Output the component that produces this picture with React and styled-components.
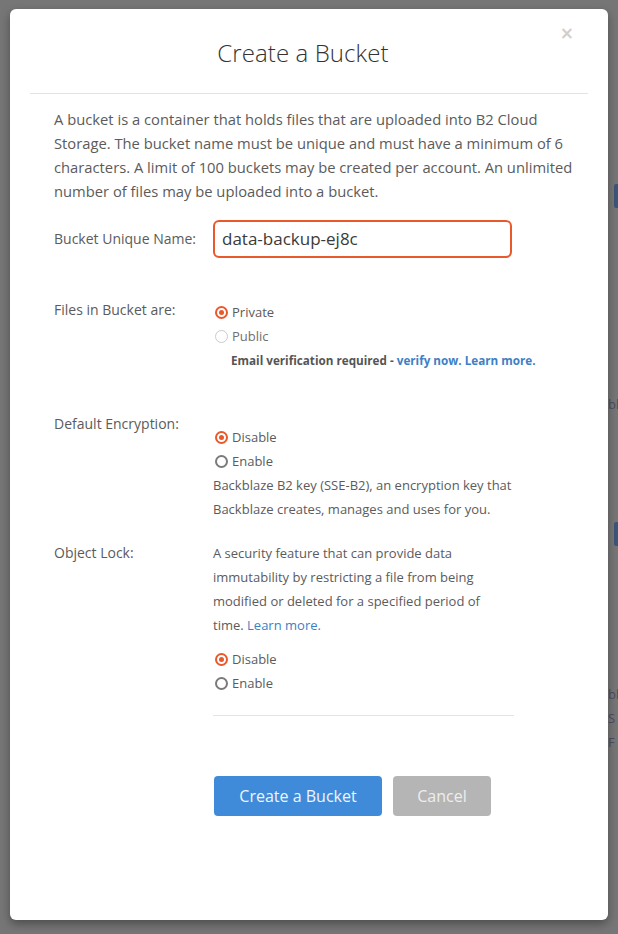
import React from "react";
import styled, { createGlobalStyle } from "styled-components";

const Global = createGlobalStyle`
  html, body { margin: 0; padding: 0; }
  body {
    font-family: "Open Sans", "Liberation Sans", sans-serif;
    background: #767676;
    width: 618px;
    height: 934px;
    overflow: hidden;
  }
`;

const ORANGE = "#e9592c";
const TEXT = "#5b5b5b";
const BLUE = "#3d80c6";

const Backdrop = styled.div`
  position: relative;
  width: 618px;
  height: 934px;
  background: #767676;
  padding: 9px 10px;
  box-sizing: border-box;
  overflow: hidden;
`;

const PeekText = styled.span`
  position: absolute;
  left: 608px;
  font-size: 13px;
  color: #2a2a55;
  opacity: 0.55;
  white-space: nowrap;
`;

const PeekButton = styled.span`
  position: absolute;
  right: 0;
  width: 4px;
  height: 24px;
  background: #2f4d7a;
  opacity: 0.8;
  border-radius: 2px 0 0 2px;
`;

const Modal = styled.div`
  position: relative;
  width: 598px;
  height: 911px;
  background: #fff;
  border-radius: 6px;
  box-shadow: 0 4px 10px rgba(0, 0, 0, 0.35);
  display: flex;
  flex-direction: column;
`;

const Header = styled.div`
  height: 84px;
  display: flex;
  align-items: center;
  justify-content: center;
  margin: 0 20px;
  padding-right: 12px;
  border-bottom: 1px solid #e3e3e3;
`;

const Title = styled.h2`
  margin: 0;
  padding-top: 3px;
  font-size: 24px;
  font-weight: 300;
  color: #333;
  letter-spacing: 0.1px;
`;

const Close = styled.button`
  position: absolute;
  top: 14px;
  right: 34px;
  border: 0;
  background: none;
  padding: 0;
  font-family: "DejaVu Sans", sans-serif;
  font-size: 17px;
  font-weight: 700;
  color: #cfcfcf;
  line-height: 20px;
  cursor: pointer;
`;

const Body = styled.div`
  padding: 13px 30px 0 44px;
  display: flex;
  flex-direction: column;
`;

const Intro = styled.p`
  margin: 0;
  font-size: 14.75px;
  line-height: 24px;
  color: ${TEXT};
`;

const Row = styled.div`
  display: grid;
  grid-template-columns: 159px 301px;
  align-items: ${(p) => (p.$center ? "center" : "start")};
  margin-top: ${(p) => p.$mt || 0}px;
`;

const Label = styled.div`
  font-size: 14px;
  line-height: 20px;
  color: ${TEXT};
  padding-top: ${(p) => p.$pt || 0}px;
`;

const Input = styled.input`
  box-sizing: border-box;
  width: 299px;
  height: 38px;
  border: 2px solid ${ORANGE};
  border-radius: 6px;
  padding: 0 7px 2px;
  font-family: "Open Sans", "Liberation Sans", sans-serif;
  font-size: 17px;
  color: #3a3a3a;
  outline: none;
  caret-color: #222;
`;

const Col = styled.div`
  display: flex;
  flex-direction: column;
  padding-top: ${(p) => p.$pt || 0}px;
`;

const RadioRow = styled.label`
  display: flex;
  align-items: center;
  height: 24px;
  gap: 4px;
  font-size: 13px;
  color: ${(p) => (p.$muted ? "#707070" : TEXT)};
  padding-left: 2px;
`;

const Circle = styled.span`
  box-sizing: border-box;
  width: 13px;
  height: 13px;
  border-radius: 50%;
  border: ${(p) =>
    p.$checked
      ? `2px solid ${ORANGE}`
      : p.$disabled
      ? "1.5px solid #cbcbcb"
      : "2px solid #7a7a7a"};
  display: flex;
  align-items: center;
  justify-content: center;
  &::after {
    content: "";
    width: 5px;
    height: 5px;
    border-radius: 50%;
    background: ${(p) => (p.$checked ? ORANGE : "transparent")};
  }
`;

const Note = styled.div`
  font-size: 11.7px;
  line-height: 24px;
  font-weight: 700;
  color: #555;
  padding-left: 18px;
  white-space: nowrap;
`;

const Link = styled.a`
  color: ${BLUE};
  text-decoration: none;
  font-weight: ${(p) => (p.$bold ? 700 : 400)};
`;

const Desc = styled.p`
  margin: 0;
  font-size: 13px;
  line-height: 24px;
  color: ${TEXT};
  max-width: ${(p) => p.$maxw || 301}px;
  margin-bottom: ${(p) => p.$mb || 0}px;
`;

const Divider = styled.div`
  margin-top: 20px;
  height: 1px;
  background: #e4e4e4;
  width: 301px;
`;

const Actions = styled.div`
  display: flex;
  gap: 11px;
  margin-top: 60px;
  padding-left: 1px;
`;

const Button = styled.button`
  height: 40px;
  border: 0;
  border-radius: 4px;
  padding: 0;
  width: ${(p) => p.$w}px;
  background: ${(p) => (p.$primary ? "#3f8bd9" : "#b5b5b5")};
  color: ${(p) => (p.$primary ? "#eef5fc" : "#eeeeee")};
  font-family: "Open Sans", "Liberation Sans", sans-serif;
  font-size: 16px;
  font-weight: 400;
  cursor: pointer;
`;

function Radio({ checked, disabled, children }) {
  return (
    <RadioRow $muted={disabled}>
      <Circle $checked={checked} $disabled={disabled} />
      {children}
    </RadioRow>
  );
}

export default function App() {
  return (
    <>
      <Global />
      <Backdrop>
        <PeekButton style={{ top: 184 }} />
        <PeekButton style={{ top: 522 }} />
        <PeekText style={{ top: 395 }}>bl</PeekText>
        <PeekText style={{ top: 685 }}>bl</PeekText>
        <PeekText style={{ top: 709 }}>S</PeekText>
        <PeekText style={{ top: 733 }}>F</PeekText>
        <Modal>
          <Close aria-label="Close">×</Close>
          <Header>
            <Title>Create a Bucket</Title>
          </Header>
          <Body>
            <Intro>
              A bucket is a container that holds files that are uploaded into B2 Cloud Storage. The
              bucket name must be unique and must have a minimum of 6 characters. A limit of 100
              buckets may be created per account. An unlimited number of files may be uploaded into
              a bucket.
            </Intro>

            <Row $center $mt={17}>
              <Label>Bucket Unique Name:</Label>
              <Input defaultValue="data-backup-ej8c" autoFocus />
            </Row>

            <Row $mt={42}>
              <Label>Files in Bucket are:</Label>
              <Col>
                <Radio checked>Private</Radio>
                <Radio disabled>Public</Radio>
                <Note>
                  Email verification required - <Link $bold href="#">verify now.</Link>{" "}
                  <Link $bold href="#">Learn more.</Link>
                </Note>
              </Col>
            </Row>

            <Row $mt={42}>
              <Label>Default Encryption:</Label>
              <Col $pt={11}>
                <Radio checked>Disable</Radio>
                <Radio>Enable</Radio>
                <Desc>
                  Backblaze B2 key (SSE-B2), an encryption key that Backblaze creates, manages and
                  uses for you.
                </Desc>
              </Col>
            </Row>

            <Row $mt={20}>
              <Label $pt={2}>Object Lock:</Label>
              <Col>
                <Desc $mb={10} $maxw={292}>
                  A security feature that can provide data immutability by restricting a file from
                  being modified or deleted for a specified period of time.{" "}
                  <Link href="#">Learn more.</Link>
                </Desc>
                <Radio checked>Disable</Radio>
                <Radio>Enable</Radio>
                <Divider />
                <Actions>
                  <Button $primary $w={168}>Create a Bucket</Button>
                  <Button $w={98}>Cancel</Button>
                </Actions>
              </Col>
            </Row>
          </Body>
        </Modal>
      </Backdrop>
    </>
  );
}
